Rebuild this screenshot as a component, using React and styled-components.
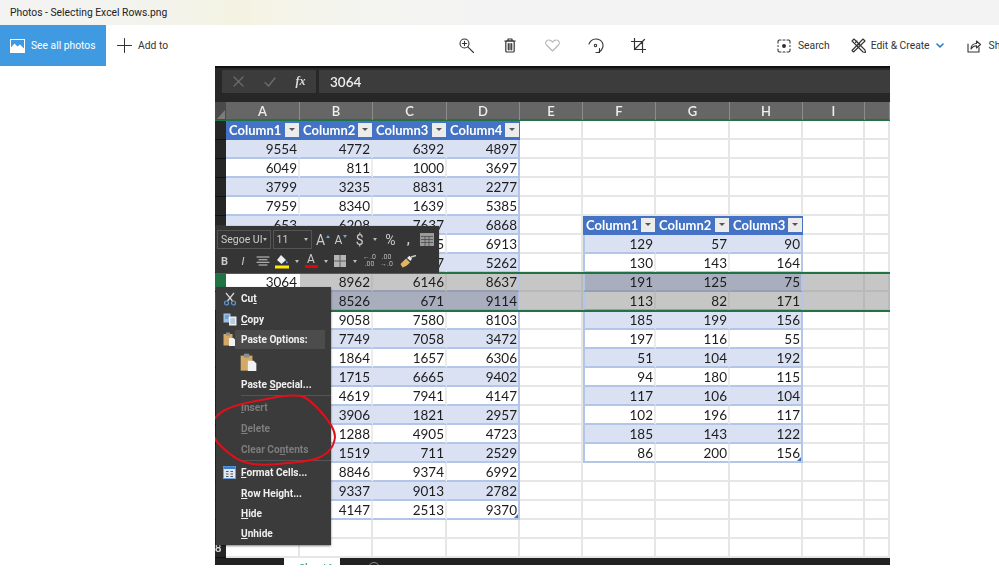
import React from 'react';
import styled, { createGlobalStyle } from 'styled-components';

const GlobalStyle = createGlobalStyle`
  html, body {
    margin: 0;
    padding: 0;
    background: #fff;
    overflow: hidden;
  }
  * { box-sizing: border-box; }
`;

const UI_FONT = 'Roboto, "Liberation Sans", sans-serif';
const SHEET_FONT = 'Lato, "Liberation Sans", sans-serif';
const COLUMNS = '11px 74px 73px 74px 73px 63px 73px 74px 73px 62px 25px';

const tableA = [
  ['Column1', 'Column2', 'Column3', 'Column4'],
  ['9554', '4772', '6392', '4897'],
  ['6049', '811', '1000', '3697'],
  ['3799', '3235', '8831', '2277'],
  ['7959', '8340', '1639', '5385'],
  ['653', '6208', '7637', '6868'],
  ['', '', '5', '6913'],
  ['', '', '7', '5262'],
  ['3064', '8962', '6146', '8637'],
  ['', '8526', '671', '9114'],
  ['', '9058', '7580', '8103'],
  ['', '7749', '7058', '3472'],
  ['', '1864', '1657', '6306'],
  ['', '1715', '6665', '9402'],
  ['', '4619', '7941', '4147'],
  ['', '3906', '1821', '2957'],
  ['', '1288', '4905', '4723'],
  ['', '1519', '711', '2529'],
  ['', '8846', '9374', '6992'],
  ['', '9337', '9013', '2782'],
  ['', '4147', '2513', '9370'],
];

const tableB = [
  ['Column1', 'Column2', 'Column3'],
  ['129', '57', '90'],
  ['130', '143', '164'],
  ['191', '125', '75'],
  ['113', '82', '171'],
  ['185', '199', '156'],
  ['197', '116', '55'],
  ['51', '104', '192'],
  ['94', '180', '115'],
  ['117', '106', '104'],
  ['102', '196', '117'],
  ['185', '143', '122'],
  ['86', '200', '156'],
];

const TABLE_B_TOP = 5;
const ROW_COUNT = 23;
const SELECTED = [8, 9];

const palette = {
  plain: { bg: '#fff', line: '#e6e6e6', bottom: '#e6e6e6' },
  band: { bg: '#d9e1f2', line: '#d9e1f2', bottom: '#b4c6e7' },
  white: { bg: '#fff', line: '#ececec', bottom: '#b4c6e7' },
  sel: { bg: '#c6c6c6', line: '#b9b9b9', bottom: '#b9b9b9' },
  selBand: { bg: '#a8aebe', line: '#a8aebe', bottom: '#979eb2' },
  selWhite: { bg: '#c6c6c6', line: '#bcbcbc', bottom: '#979eb2' },
  active: { bg: '#fff', line: '#fff', bottom: '#c6c6c6' },
};

const Page = styled.div`
  width: 999px;
  height: 577px;
  background: #fff;
  overflow: hidden;
`;

const TitleBar = styled.div`
  height: 25px;
  padding-left: 10px;
  display: flex;
  align-items: center;
  font: 10.3px ${UI_FONT};
  color: #222;
  background: linear-gradient(90deg, #f3f3f3 0, #f3f3ee 150px, #f4f3e2 240px, #f4f4ee 330px, #f3f3f3 470px, #f3f3f3 100%);
`;

const Toolbar = styled.div`
  height: 41px;
  display: grid;
  grid-template-columns: 445px 215px 1fr;
  align-items: center;
  overflow: hidden;
  font: 10.3px ${UI_FONT};
  color: #333;
`;

const LeftGroup = styled.div`
  display: flex;
  align-items: center;
  height: 100%;
`;

const SeeAll = styled.div`
  width: 106px;
  height: 100%;
  padding-left: 10px;
  display: flex;
  align-items: center;
  gap: 6px;
  background: #3f9ae2;
  color: #fff;
`;

const AddTo = styled.div`
  margin-left: 11px;
  display: flex;
  align-items: center;
  gap: 6px;
`;

const CenterGroup = styled.div`
  display: flex;
  align-items: center;
`;

const IconSlot = styled.div`
  width: 43px;
  display: flex;
  justify-content: center;
`;

const RightGroup = styled.div`
  padding-left: 117px;
  display: flex;
  align-items: center;
  white-space: nowrap;
`;

const ActionItem = styled.div`
  display: flex;
  align-items: center;
  gap: ${(p) => p.$gap || 7}px;
  margin-right: ${(p) => p.$after || 0}px;
`;

const Viewer = styled.div`
  padding-left: 215px;
`;

const Shot = styled.div`
  position: relative;
  width: 675px;
  height: 499px;
  overflow: hidden;
  filter: blur(0.35px);
  background: #fff;
`;

const FormulaBar = styled.div`
  height: 36px;
  padding: 2px 0 9px 7px;
  display: flex;
  gap: 3px;
  background: #272727;
  border-top: 2px solid #111;
`;

const FormulaButtons = styled.div`
  width: 94px;
  display: flex;
  align-items: center;
  background: #3c3c3c;
`;

const FormulaSlot = styled.div`
  width: ${(p) => p.$w}px;
  display: flex;
  justify-content: center;
  color: ${(p) => p.$color || '#6c6c6c'};
  font: italic bold 12px "Liberation Serif", serif;
`;

const FormulaInput = styled.div`
  flex: 1;
  padding-left: 11px;
  display: flex;
  align-items: center;
  background: #3c3c3c;
  color: #eee;
  font: 600 13.5px ${SHEET_FONT};
`;

const HeaderRow = styled.div`
  height: 19px;
  display: grid;
  grid-template-columns: ${COLUMNS};
  background: #666;
  border-bottom: 2px solid #217346;
`;

const Corner = styled.div`
  position: relative;
  background: #4a4a4a;
  &::after {
    content: '';
    position: absolute;
    right: 1px;
    bottom: 1px;
    border-style: solid;
    border-width: 0 0 9px 8px;
    border-color: transparent transparent #7c7c7c transparent;
  }
`;

const HeaderCell = styled.div`
  text-align: center;
  font: 600 13px/18px ${SHEET_FONT};
  color: #efefef;
  border-right: 1.5px solid #8b8b8b;
`;

const Row = styled.div`
  height: 19px;
  display: grid;
  grid-template-columns: ${COLUMNS};
`;

const RowLabel = styled.div`
  background: ${(p) => (p.$active ? '#217346' : '#262626')};
  border-bottom: 1px solid #111;
  color: #ddd;
  font: 700 11px/17px ${SHEET_FONT};
  text-align: left;
  overflow: hidden;
`;

const Cell = styled.div`
  position: relative;
  padding-right: 1px;
  text-align: right;
  font: 13.5px/19px ${SHEET_FONT};
  color: #1c1c1c;
  overflow: hidden;
  background: ${(p) => palette[p.$kind].bg};
  border-right: 2px solid ${(p) => (p.$edge ? '#b4c6e7' : palette[p.$kind].line)};
  border-bottom: 2px solid ${(p) => palette[p.$kind].bottom};
  border-left: ${(p) => (p.$leftEdge ? '2px solid #b4c6e7' : 'none')};
`;

const ColumnTitle = styled.div`
  display: flex;
  align-items: center;
  justify-content: space-between;
  padding: 0 1px 0 3px;
  background: #4472c4;
  color: #fff;
  font: 700 13px ${SHEET_FONT};
  border-bottom: 2px solid #4472c4;
`;

const FilterButton = styled.span`
  width: 14px;
  height: 14px;
  display: flex;
  align-items: center;
  justify-content: center;
  background: #ececec;
  &::after {
    content: '';
    border-style: solid;
    border-width: 3px 3px 0 3px;
    border-color: #555 transparent transparent transparent;
  }
`;

const ResizeMark = styled.span`
  position: absolute;
  right: 0;
  bottom: 0;
  border-style: solid;
  border-width: 0 0 4px 4px;
  border-color: transparent transparent #4472c4 transparent;
`;

const SelectionFrame = styled.div`
  position: absolute;
  left: 11px;
  right: 0;
  top: 206px;
  height: 40px;
  border-top: 2px solid #217346;
  border-bottom: 2px solid #217346;
`;

const TabBar = styled.div`
  height: 7px;
  display: flex;
  background: #222;
`;

const TabGap = styled.div`
  width: 69px;
`;

const SheetTab = styled.div`
  width: 56px;
  background: #fff;
  padding: 3px 0 0 15px;
  font: 700 11px ${SHEET_FONT};
  color: #4fa585;
  overflow: hidden;
`;

const NewSheet = styled.div`
  margin: 4px 0 0 28px;
  width: 12px;
  height: 12px;
  border: 1px solid #888;
  border-radius: 50%;
`;

const MiniBar = styled.div`
  position: absolute;
  left: 1px;
  top: 160px;
  width: 223px;
  height: 47px;
  padding: 3px 0 0 1px;
  background: #353535;
  box-shadow: 0 0 1px #777;
  color: #ccc;
  font: 10.5px ${UI_FONT};
`;

const MiniRow = styled.div`
  height: ${(p) => p.$h}px;
  display: flex;
  align-items: center;
`;

const ComboBox = styled.div`
  width: ${(p) => p.$w}px;
  height: 19px;
  margin-right: 2px;
  padding: 0 3px;
  display: flex;
  align-items: center;
  justify-content: space-between;
  border: 1px solid #555;
  font-size: 10.5px;
  white-space: nowrap;
  overflow: hidden;
`;

const MiniButton = styled.div`
  width: ${(p) => p.$w}px;
  display: flex;
  justify-content: center;
  align-items: center;
  line-height: 1;
  font-weight: ${(p) => (p.$bold ? 700 : 400)};
  font-style: ${(p) => (p.$italic ? 'italic' : 'normal')};
  font-size: ${(p) => p.$size || 12}px;
  color: ${(p) => p.$color || '#ccc'};
`;

const Caret = styled.span`
  border-style: solid;
  border-width: 3px 2.5px 0 2.5px;
  border-color: #bbb transparent transparent transparent;
`;

const GrowMark = styled.span`
  width: 0;
  height: 0;
  margin: -6px 0 0 1px;
  border-style: solid;
  border-color: transparent;
  border-width: ${(p) => (p.$down ? '3px 2.5px 0 2.5px' : '0 2.5px 3px 2.5px')};
  border-top-color: ${(p) => (p.$down ? '#6aa7dc' : 'transparent')};
  border-bottom-color: ${(p) => (p.$down ? 'transparent' : '#6aa7dc')};
`;

const ColorLetter = styled.div`
  display: flex;
  flex-direction: column;
  align-items: center;
  line-height: 11px;
  font-size: 12px;
  &::after {
    content: '';
    width: 13px;
    height: 3px;
    background: ${(p) => p.$bar};
  }
`;

const DecimalIcon = styled.span`
  font-size: 7px;
  line-height: 7px;
  text-align: center;
  color: #bbb;
  white-space: pre;
`;

const ContextMenu = styled.div`
  position: absolute;
  left: 1px;
  top: 221px;
  width: 115px;
  height: 258px;
  padding-top: 1px;
  background: #3b3b3b;
  box-shadow: 0 1px 2px rgba(0, 0, 0, 0.5);
`;

const MenuItem = styled.div`
  height: ${(p) => p.$h || 21}px;
  display: flex;
  align-items: center;
  color: ${(p) => (p.$disabled ? '#7d7d7d' : '#efefef')};
  font: 700 10.1px/${(p) => p.$h || 21}px ${UI_FONT};
  white-space: nowrap;
  u {
    text-underline-offset: 1px;
  }
`;

const MenuIcon = styled.div`
  width: 25px;
  padding-left: 2px;
  display: flex;
  align-items: center;
  justify-content: center;
  flex-shrink: 0;
`;

const MenuLabel = styled.div`
  flex: 1;
  height: 100%;
  padding-left: ${(p) => (p.$head ? 6 : 0)}px;
  margin-left: ${(p) => (p.$head ? -6 : 0)}px;
  margin-right: ${(p) => (p.$head ? 6 : 0)}px;
  background: ${(p) => (p.$head ? '#4c4c4c' : 'transparent')};
`;

const MenuSeparator = styled.div`
  height: ${(p) => p.$h || 2}px;
  margin-left: 25px;
  border-top: 1px solid #555;
`;

const PasteSlot = styled.div`
  height: 26px;
  padding-left: 24px;
  display: flex;
  align-items: center;
`;

const RedCircle = styled.svg`
  position: absolute;
  left: -5px;
  top: 325px;
  pointer-events: none;
`;

const Line = ({ size = 16, w, h, children, sw = 1.1, color = '#333' }) => (
  <svg width={w || size} height={h || size} viewBox={`0 0 ${w || size} ${h || size}`} fill="none" stroke={color} strokeWidth={sw} strokeLinecap="round" strokeLinejoin="round">
    {children}
  </svg>
);

const PhotosIcon = () => (
  <svg width="15" height="14" viewBox="0 0 15 14">
    <rect x="0.5" y="0.5" width="14" height="13" fill="#3f9ae2" stroke="#fff" strokeWidth="1" />
    <path d="M0.5 13.5V9L4.5 4.5L7.5 7.5L10 5.5L14.5 10V13.5Z" fill="#fff" />
  </svg>
);

const PlusIcon = () => (
  <Line size={15} sw={1}><path d="M7.5 0.5V14.5M0.5 7.5H14.5" /></Line>
);

const ZoomIcon = () => (
  <Line size={16}>
    <circle cx="5.5" cy="5.5" r="4.5" />
    <path d="M3.4 5.5H7.6M5.5 3.4V7.6M8.8 8.8L14.5 14.5" />
  </Line>
);

const TrashIcon = () => (
  <Line w={12} h={15} sw={1.2}>
    <path d="M0.8 3H11.2M4 3V1H8V3" />
    <rect x="1.8" y="3" width="8.4" height="11" rx="1" />
    <path d="M4.3 5.5V11.8M6 5.5V11.8M7.7 5.5V11.8" />
  </Line>
);

const HeartIcon = () => (
  <Line w={15} h={13} color="#b5b5b5">
    <path d="M7.5 12L1.5 6C0 4.3 0.6 1 3.6 1C5.5 1 6.8 2 7.5 3.2C8.2 2 9.5 1 11.4 1C14.4 1 15 4.3 13.5 6Z" />
  </Line>
);

const RotateIcon = () => (
  <Line w={16} h={16}>
    <path d="M1 6C2.5 2 6.5 0.5 10 1.2C14 2.2 16 6 14.5 10C14 11.5 13 13 11 14" />
    <path d="M11.5 10.5V14.5H8" />
    <circle cx="7.5" cy="7.5" r="1.2" />
  </Line>
);

const CropIcon = () => (
  <Line size={15} sw={1.2}>
    <path d="M3.5 0.5V11.5H14.5M0.5 3.5H11.5V14.5M13.5 1.5L3.5 11.5" />
  </Line>
);

const ScanIcon = () => (
  <Line size={14}>
    <path d="M4 1H2.5C1.5 1 1 1.5 1 2.5V4M10 1H11.5C12.5 1 13 1.5 13 2.5V4M1 6.5V7.5M13 6.5V7.5M1 10V11.5C1 12.5 1.5 13 2.5 13H4M13 10V11.5C13 12.5 12.5 13 11.5 13H10M6 1H8M6 13H8" />
    <circle cx="7" cy="7" r="1.4" fill="#333" />
  </Line>
);

const EditIcon = () => (
  <Line size={15}>
    <path d="M1 12.5L2.5 14L14 3L12 1Z" />
    <path d="M1 3L3 1L14 12L14.5 14.5L12 14Z" />
    <path d="M4.5 4.5L6 3M7 7L8.5 5.5" />
  </Line>
);

const ChevronIcon = () => (
  <Line w={8} h={6} sw={1.5} color="#1e78c8"><path d="M1 1L4 4L7 1" /></Line>
);

const ShareIcon = () => (
  <Line size={14}>
    <path d="M1 5V13H12V8.5" />
    <path d="M4 10C4 6.5 6.5 4.5 9.5 4.5V2L13.5 5.5L9.5 9V6.8C7.5 6.8 5.5 7.8 4 10Z" />
  </Line>
);

const CutIcon = () => (
  <svg width="14" height="14" viewBox="0 0 14 14" fill="none" strokeWidth="1.2">
    <path d="M3 1L9.5 9M11 1L4.5 9" stroke="#d8d8d8" />
    <circle cx="3.5" cy="11" r="2" stroke="#5b9bd5" />
    <circle cx="10.5" cy="11" r="2" stroke="#5b9bd5" />
  </svg>
);

const CopyIcon = () => (
  <svg width="14" height="13" viewBox="0 0 14 13">
    <rect x="0.5" y="0.5" width="7" height="9" fill="#9dbfe3" />
    <rect x="6" y="3.5" width="7.5" height="9" fill="#eee" />
    <path d="M7.5 6H12M7.5 8H12M7.5 10H12" stroke="#5b9bd5" strokeWidth="0.8" />
    <path d="M2 3H6M2 5H5" stroke="#3f6fa8" strokeWidth="0.8" />
  </svg>
);

const ClipboardIcon = ({ size = 13 }) => (
  <svg width={size} height={size * 1.1} viewBox="0 0 13 14.3">
    <rect x="0.5" y="2" width="9" height="11.5" fill="#d3a965" />
    <rect x="3" y="0.5" width="4" height="3" fill="#8d8d8d" />
    <path d="M6 6H10.5L12.5 8V14H6Z" fill="#f2f2f2" />
  </svg>
);

const FormatCellsIcon = () => (
  <svg width="13" height="13" viewBox="0 0 13 13">
    <rect x="0.5" y="0.5" width="12" height="12" fill="#dfe9f5" stroke="#6fa0d8" />
    <rect x="0.5" y="0.5" width="12" height="2.5" fill="#3c7fd0" />
    <path d="M3 5.5H5.5M7.5 5.5H10M3 8H5.5M7.5 8H10M3 10.5H5.5M7.5 10.5H10" stroke="#555" strokeWidth="1" />
  </svg>
);

const AlignIcon = () => (
  <Line w={14} h={10} color="#ccc"><path d="M1 1H13M3 3.7H11M1 6.3H13M3 9H11" /></Line>
);

const FillIcon = () => (
  <svg width="16" height="15" viewBox="0 0 16 15">
    <path d="M7 1L12 6L7.5 10L3 6Z" fill="#eee" />
    <path d="M12.5 6.5C14 8 14 9.5 13 9.5C12 9.5 12 8 12.5 6.5Z" fill="#5b9bd5" />
    <rect x="1" y="11.5" width="14" height="3" fill="#ffea00" />
  </svg>
);

const BorderIcon = () => (
  <svg width="12" height="12" viewBox="0 0 12 12">
    <rect width="12" height="12" fill="#b5b5b5" />
    <path d="M6 0V12M0 6H12" stroke="#5e5e5e" strokeWidth="1" />
  </svg>
);

const SheetIcon = () => (
  <svg width="14" height="13" viewBox="0 0 14 13">
    <rect width="14" height="13" fill="#9a9a9a" />
    <path d="M1 3.5H13M1 6.5H13M1 9.5H13M5 3.5V13M9 3.5V13" stroke="#4b4b4b" strokeWidth="0.8" />
  </svg>
);

const BrushIcon = () => (
  <svg width="17" height="13" viewBox="0 0 17 13">
    <path d="M0.5 9L6 3.5L10 7.5C8 10 5 12 2.5 12.5Z" fill="#e2b565" />
    <path d="M7 3L9.5 0.8L12 3.5L10.5 6Z" fill="#eee" />
    <path d="M11 2L16 0.5" stroke="#ccc" strokeWidth="1.4" />
  </svg>
);

const Check = () => (
  <Line size={12} sw={1.4} color="#6c6c6c"><path d="M1 6.5L4.5 10L11 2" /></Line>
);

const Cross = () => (
  <Line size={11} sw={1.3} color="#6c6c6c"><path d="M1 1L10 10M10 1L1 10" /></Line>
);

// which table (if any) owns a sheet cell, and how it should be painted
const describeCell = (row, col) => {
  const selected = SELECTED.includes(row);
  let text = '';
  let table = null;
  if (col <= 3 && row <= 20) {
    table = { rowIndex: row, last: 3, first: 0, lastRow: 20 };
    text = tableA[row][col];
  } else if (col >= 5 && col <= 7 && row >= TABLE_B_TOP && row < TABLE_B_TOP + tableB.length) {
    table = { rowIndex: row - TABLE_B_TOP, last: 7, first: 5, lastRow: tableB.length - 1 };
    text = tableB[row - TABLE_B_TOP][col - 5];
  }
  if (!table) return { kind: selected ? 'sel' : 'plain', text };
  const isBand = table.rowIndex % 2 === 1;
  let kind = isBand ? 'band' : 'white';
  if (selected) kind = isBand ? 'selBand' : 'selWhite';
  if (row === 8 && col === 0) kind = 'active';
  return {
    kind,
    text,
    title: table.rowIndex === 0,
    edge: col === table.last,
    leftEdge: col === table.first && col !== 0,
    mark: col === table.last && table.rowIndex === table.lastRow,
  };
};

const SheetRow = ({ row }) => (
  <Row>
    <RowLabel $active={SELECTED.includes(row)}>{row === 22 ? '8' : ''}</RowLabel>
    {Array.from({ length: 10 }, (_, col) => {
      const cell = describeCell(row, col);
      if (cell.title) {
        return (
          <ColumnTitle key={col}>
            {cell.text}
            <FilterButton />
          </ColumnTitle>
        );
      }
      return (
        <Cell key={col} $kind={cell.kind} $edge={cell.edge} $leftEdge={cell.leftEdge}>
          {cell.text}
          {cell.mark && <ResizeMark />}
        </Cell>
      );
    })}
  </Row>
);

const App = () => (
  <Page>
    <GlobalStyle />
    <TitleBar>Photos - Selecting Excel Rows.png</TitleBar>
    <Toolbar>
      <LeftGroup>
        <SeeAll>
          <PhotosIcon />
          See all photos
        </SeeAll>
        <AddTo>
          <PlusIcon />
          Add to
        </AddTo>
      </LeftGroup>
      <CenterGroup>
        <IconSlot><ZoomIcon /></IconSlot>
        <IconSlot><TrashIcon /></IconSlot>
        <IconSlot><HeartIcon /></IconSlot>
        <IconSlot><RotateIcon /></IconSlot>
        <IconSlot><CropIcon /></IconSlot>
      </CenterGroup>
      <RightGroup>
        <ActionItem $after={21} $gap={7}><ScanIcon />Search</ActionItem>
        <ActionItem $after={6} $gap={5}><EditIcon />Edit &amp; Create</ActionItem>
        <ActionItem $after={23}><ChevronIcon /></ActionItem>
        <ActionItem $gap={8}><ShareIcon />Share</ActionItem>
      </RightGroup>
    </Toolbar>
    <Viewer>
      <Shot>
        <FormulaBar>
          <FormulaButtons>
            <FormulaSlot $w={33}><Cross /></FormulaSlot>
            <FormulaSlot $w={30}><Check /></FormulaSlot>
            <FormulaSlot $w={31} $color="#ddd">fx</FormulaSlot>
          </FormulaButtons>
          <FormulaInput>3064</FormulaInput>
        </FormulaBar>
        <HeaderRow>
          <Corner />
          {['A', 'B', 'C', 'D', 'E', 'F', 'G', 'H', 'I', ''].map((name, i) => (
            <HeaderCell key={i}>{name}</HeaderCell>
          ))}
        </HeaderRow>
        {Array.from({ length: ROW_COUNT }, (_, row) => (
          <SheetRow key={row} row={row} />
        ))}
        <TabBar>
          <TabGap />
          <SheetTab>Sheet1</SheetTab>
          <NewSheet />
        </TabBar>

        <SelectionFrame />

        <MiniBar>
          <MiniRow $h={21}>
            <ComboBox $w={54}>Segoe UI <Caret /></ComboBox>
            <ComboBox $w={40}>11 <Caret /></ComboBox>
            <MiniButton $w={18} $size={14}>A<GrowMark /></MiniButton>
            <MiniButton $w={18} $size={12}>A<GrowMark $down /></MiniButton>
            <MiniButton $w={20} $size={14}>$</MiniButton>
            <MiniButton $w={10}><Caret /></MiniButton>
            <MiniButton $w={22} $size={14}>%</MiniButton>
            <MiniButton $w={14} $bold $size={13}>,</MiniButton>
            <MiniButton $w={24}><SheetIcon /></MiniButton>
          </MiniRow>
          <MiniRow $h={22}>
            <MiniButton $w={15} $bold $size={11}>B</MiniButton>
            <MiniButton $w={22} $italic $size={11}>I</MiniButton>
            <MiniButton $w={18}><AlignIcon /></MiniButton>
            <MiniButton $w={20}><FillIcon /></MiniButton>
            <MiniButton $w={10}><Caret /></MiniButton>
            <MiniButton $w={18}><ColorLetter $bar="#f00000">A</ColorLetter></MiniButton>
            <MiniButton $w={11}><Caret /></MiniButton>
            <MiniButton $w={18}><BorderIcon /></MiniButton>
            <MiniButton $w={12}><Caret /></MiniButton>
            <MiniButton $w={17}><DecimalIcon>{'←.0\n.00'}</DecimalIcon></MiniButton>
            <MiniButton $w={17}><DecimalIcon>{'.00\n→.0'}</DecimalIcon></MiniButton>
            <MiniButton $w={26}><BrushIcon /></MiniButton>
          </MiniRow>
        </MiniBar>

        <ContextMenu>
          <MenuItem><MenuIcon><CutIcon /></MenuIcon><MenuLabel>Cu<u>t</u></MenuLabel></MenuItem>
          <MenuItem><MenuIcon><CopyIcon /></MenuIcon><MenuLabel><u>C</u>opy</MenuLabel></MenuItem>
          <MenuItem $h={19}><MenuIcon><ClipboardIcon /></MenuIcon><MenuLabel $head>Paste Options:</MenuLabel></MenuItem>
          <PasteSlot><ClipboardIcon size={17} /></PasteSlot>
          <MenuItem $h={20}><MenuIcon /><MenuLabel>Paste <u>S</u>pecial...</MenuLabel></MenuItem>
          <MenuSeparator />
          <MenuItem $disabled><MenuIcon /><MenuLabel><u>I</u>nsert</MenuLabel></MenuItem>
          <MenuItem $disabled><MenuIcon /><MenuLabel><u>D</u>elete</MenuLabel></MenuItem>
          <MenuItem $h={21} $disabled><MenuIcon /><MenuLabel>Clear Co<u>n</u>tents</MenuLabel></MenuItem>
          <MenuSeparator />
          <MenuItem><MenuIcon><FormatCellsIcon /></MenuIcon><MenuLabel><u>F</u>ormat Cells...</MenuLabel></MenuItem>
          <MenuItem><MenuIcon /><MenuLabel><u>R</u>ow Height...</MenuLabel></MenuItem>
          <MenuItem $h={20}><MenuIcon /><MenuLabel><u>H</u>ide</MenuLabel></MenuItem>
          <MenuItem $h={20}><MenuIcon /><MenuLabel><u>U</u>nhide</MenuLabel></MenuItem>
        </ContextMenu>

        <RedCircle width="130" height="78" viewBox="0 0 130 78" fill="none">
          <path
            d="M95 6C84 3 72 5 62 7C45 10 26 13 15 19C6 24 2 30 2 36C2 45 6 51 12 56C20 64 28 70 38 72C50 75 64 74 78 72C90 71 101 70 108 67C118 63 124 56 125 46C125 38 119 30 112 22C107 16 102 10 92 5"
            stroke="#e0101a"
            strokeWidth="2"
            strokeLinecap="round"
          />
        </RedCircle>
      </Shot>
    </Viewer>
  </Page>
);

export default App;
